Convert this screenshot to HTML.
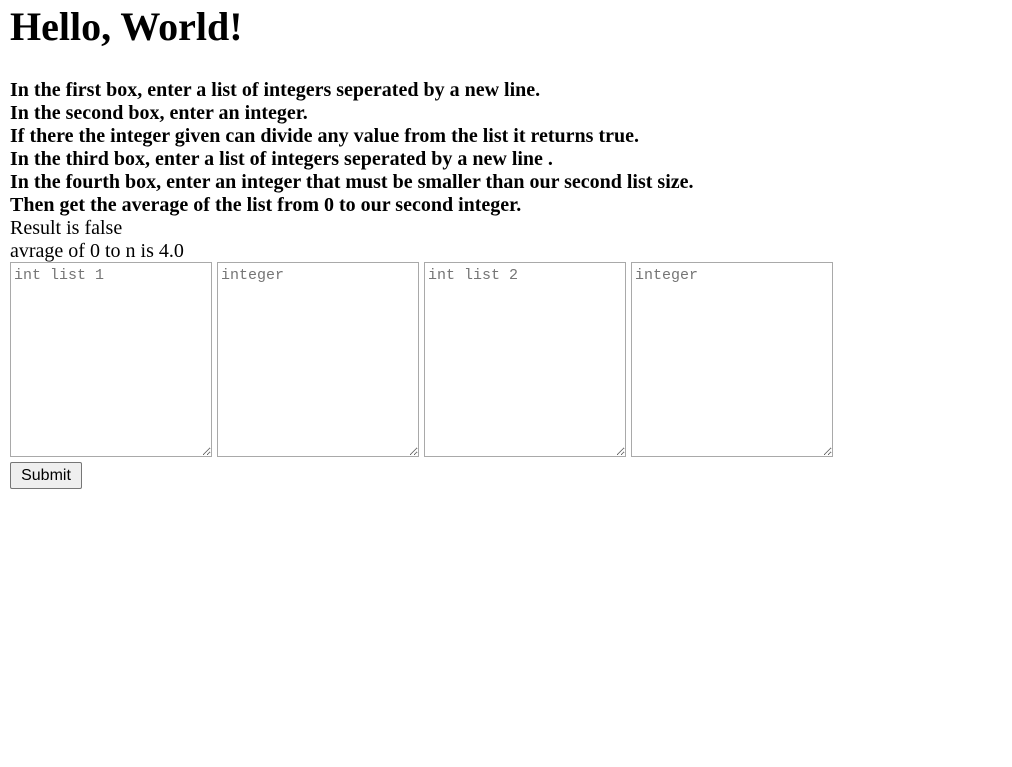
<!DOCTYPE html>
<html><head><style>
body{margin:0;padding:0 0 0 10px;font-family:"Liberation Serif",serif;color:#000;background:#fff}
h1{margin:0;padding-top:4px;font-size:40px;line-height:46px;height:75px;font-weight:bold}
.b{font-weight:bold;font-size:20px;line-height:23px;height:23px;white-space:nowrap}
.n{font-size:20px;line-height:23px;height:23px;white-space:nowrap}
.ta{display:flex;gap:5px;height:195px}
textarea{box-sizing:border-box;width:202px;height:195px;margin:0;border:1px solid #a9a9a9;padding:4px 3px 3px;font-family:"Liberation Mono","DejaVu Sans Mono",monospace;font-size:15px;resize:both}
textarea::placeholder{color:#757575}
button{margin-top:5px;height:27px;width:72px;font-family:"Liberation Sans",sans-serif;font-size:16px;background:#efefef;border:1px solid #767676;border-radius:2px;padding:0}
</style></head><body>
<h1>Hello, World!</h1>
<div class="b">In the first box, enter a list of integers seperated by a new line.</div>
<div class="b">In the second box, enter an integer.</div>
<div class="b">If there the integer given can divide any value from the list it returns true.</div>
<div class="b">In the third box, enter a list of integers seperated by a new line .</div>
<div class="b">In the fourth box, enter an integer that must be smaller than our second list size.</div>
<div class="b">Then get the average of the list from 0 to our second integer.</div>
<div class="n">Result is false</div>
<div class="n" style="height:22px">avrage of 0 to n is 4.0</div>
<div class="ta"><textarea placeholder="int list 1"></textarea><textarea placeholder="integer"></textarea><textarea placeholder="int list 2"></textarea><textarea placeholder="integer"></textarea></div>
<button>Submit</button>
</body></html>
